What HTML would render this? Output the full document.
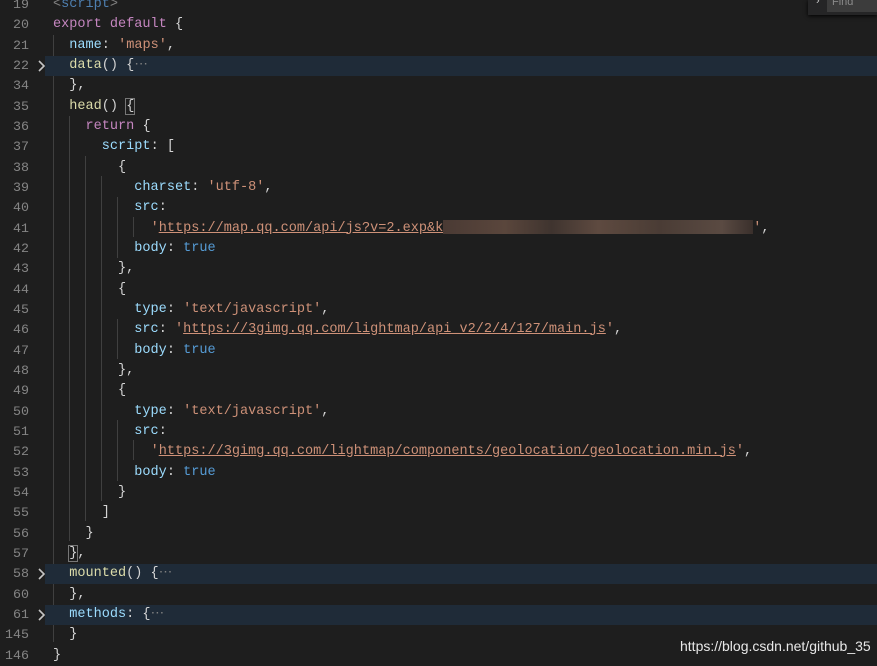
<!DOCTYPE html>
<html><head><meta charset="utf-8"><style>
body{margin:0;width:877px;height:662px;background:#1e1e1e;overflow:hidden;position:relative;font-family:"Liberation Mono",monospace;font-size:13.55px}
.l{position:absolute;left:0;width:877px;height:20px;line-height:20px;white-space:pre;margin-top:1.5px}
.n{position:absolute;left:0;width:29px;text-align:right;color:#858585;font-size:13.3px}
.c{position:absolute;left:53px;color:#d4d4d4}
.hl{background:#1f2b38}
.hl .bg{position:absolute;left:0;width:45px;top:0;height:20px;background:#1e1e1e}
.k{color:#c586c0}.v{color:#9cdcfe}.f{color:#dcdcaa}.s{color:#ce9178}.b{color:#569cd6}.g{color:#808080}.d{color:#808080}
.u{text-decoration:underline;text-decoration-color:#ce9178}
.ch{position:absolute;left:37px;top:4px}
.ig{position:absolute;width:1px;background:#404040}
</style></head><body>
<div class="ig" style="left:53px;top:35px;height:607px"></div>
<div class="ig" style="left:69px;top:116px;height:425px"></div>
<div class="ig" style="left:85px;top:156px;height:365px"></div>
<div class="ig" style="left:101px;top:176px;height:325px"></div>
<div class="ig" style="left:117px;top:197px;height:61px"></div>
<div class="ig" style="left:117px;top:319px;height:40px"></div>
<div class="ig" style="left:117px;top:420px;height:61px"></div>
<div class="ig" style="left:133px;top:217px;height:20px"></div>
<div class="ig" style="left:133px;top:440px;height:20px"></div>

<div class="l" style="top:-7px"><span class="n">19</span><span class="c"><span class="g">&lt;</span><span class="b" style="color:#4e7fb0">script</span><span class="g">&gt;</span></span></div>
<div class="l" style="top:13px"><span class="n">20</span><span class="c"><span class="k">export default</span> <span style="color:#d4d4d4">{</span></span></div>
<div class="l" style="top:34px"><span class="n">21</span><span class="c">  <span class="v">name</span>: <span class="s">'maps'</span>,</span></div>
<div class="l hl" style="top:54px"><span class="bg"></span><span class="n">22</span><svg class="ch" width="10" height="12"><polyline points="2,1 7,6 2,11" fill="none" stroke="#c5c5c5" stroke-width="1.6"/></svg><span class="c">  <span class="f">data</span>() {<span class="d">⋯</span></span></div>
<div class="l" style="top:74px"><span class="n">34</span><span class="c">  },</span></div>
<div class="l" style="top:95px"><span class="n">35</span><span class="c">  <span class="f">head</span>() <span style="outline:1px solid #777">{</span></span></div>
<div class="l" style="top:115px"><span class="n">36</span><span class="c">    <span class="k">return</span> {</span></div>
<div class="l" style="top:135px"><span class="n">37</span><span class="c">      <span class="v">script</span>: [</span></div>
<div class="l" style="top:156px"><span class="n">38</span><span class="c">        {</span></div>
<div class="l" style="top:176px"><span class="n">39</span><span class="c">          <span class="v">charset</span>: <span class="s">'utf-8'</span>,</span></div>
<div class="l" style="top:196px"><span class="n">40</span><span class="c">          <span class="v">src</span>:</span></div>
<div class="l" style="top:217px"><span class="n">41</span><span class="c">            <span class="s">'<span class="u">https://map.qq.com/api/js?v=2.exp&amp;k</span></span><span style="display:inline-block;width:310px;height:14px;vertical-align:middle;background:linear-gradient(90deg,#4a3a34,#5a463c 20%,#3f342f 35%,#5e4a40 50%,#4a3c35 70%,#5a4a42 90%,#3a302c)"></span><span class="s">'</span>,</span></div>
<div class="l" style="top:237px"><span class="n">42</span><span class="c">          <span class="v">body</span>: <span class="b">true</span></span></div>
<div class="l" style="top:257px"><span class="n">43</span><span class="c">        },</span></div>
<div class="l" style="top:278px"><span class="n">44</span><span class="c">        {</span></div>
<div class="l" style="top:298px"><span class="n">45</span><span class="c">          <span class="v">type</span>: <span class="s">'text/javascript'</span>,</span></div>
<div class="l" style="top:318px"><span class="n">46</span><span class="c">          <span class="v">src</span>: <span class="s">'<span class="u">https://3gimg.qq.com/lightmap/api_v2/2/4/127/main.js</span>'</span>,</span></div>
<div class="l" style="top:339px"><span class="n">47</span><span class="c">          <span class="v">body</span>: <span class="b">true</span></span></div>
<div class="l" style="top:359px"><span class="n">48</span><span class="c">        },</span></div>
<div class="l" style="top:379px"><span class="n">49</span><span class="c">        {</span></div>
<div class="l" style="top:400px"><span class="n">50</span><span class="c">          <span class="v">type</span>: <span class="s">'text/javascript'</span>,</span></div>
<div class="l" style="top:420px"><span class="n">51</span><span class="c">          <span class="v">src</span>:</span></div>
<div class="l" style="top:440px"><span class="n">52</span><span class="c">            <span class="s">'<span class="u">https://3gimg.qq.com/lightmap/components/geolocation/geolocation.min.js</span>'</span>,</span></div>
<div class="l" style="top:461px"><span class="n">53</span><span class="c">          <span class="v">body</span>: <span class="b">true</span></span></div>
<div class="l" style="top:481px"><span class="n">54</span><span class="c">        }</span></div>
<div class="l" style="top:501px"><span class="n">55</span><span class="c">      ]</span></div>
<div class="l" style="top:522px"><span class="n">56</span><span class="c">    }</span></div>
<div class="l" style="top:542px"><span class="n">57</span><span class="c">  <span style="outline:1px solid #777">}</span>,</span></div>
<div class="l hl" style="top:562px"><span class="bg"></span><span class="n">58</span><svg class="ch" width="10" height="12"><polyline points="2,1 7,6 2,11" fill="none" stroke="#c5c5c5" stroke-width="1.6"/></svg><span class="c">  <span class="f">mounted</span>() {<span class="d">⋯</span></span></div>
<div class="l" style="top:583px"><span class="n">60</span><span class="c">  },</span></div>
<div class="l hl" style="top:603px"><span class="bg"></span><span class="n">61</span><svg class="ch" width="10" height="12"><polyline points="2,1 7,6 2,11" fill="none" stroke="#c5c5c5" stroke-width="1.6"/></svg><span class="c">  <span class="v">methods</span>: {<span class="d">⋯</span></span></div>
<div class="l" style="top:623px"><span class="n">145</span><span class="c">  }</span></div>
<div class="l" style="top:644px"><span class="n">146</span><span class="c">}</span></div>

<div style="position:absolute;left:808px;top:0;width:69px;height:15px;background:#252526;box-shadow:0 1px 4px #000"></div>
<div style="position:absolute;left:816px;top:-5px;color:#c5c5c5;font-family:'Liberation Sans',sans-serif;font-size:11px">›</div>
<div style="position:absolute;left:827px;top:0;width:50px;height:12px;background:#3c3c3c;color:#8a8a8a;font-family:'Liberation Sans',sans-serif;font-size:11px;line-height:5px;padding-left:5px">Find</div>
<div style="position:absolute;left:680px;top:638px;color:#e8e8e8;font-family:'Liberation Sans',sans-serif;font-size:14px;white-space:nowrap">https://blog.csdn.net/github_35</div>
</body></html>
